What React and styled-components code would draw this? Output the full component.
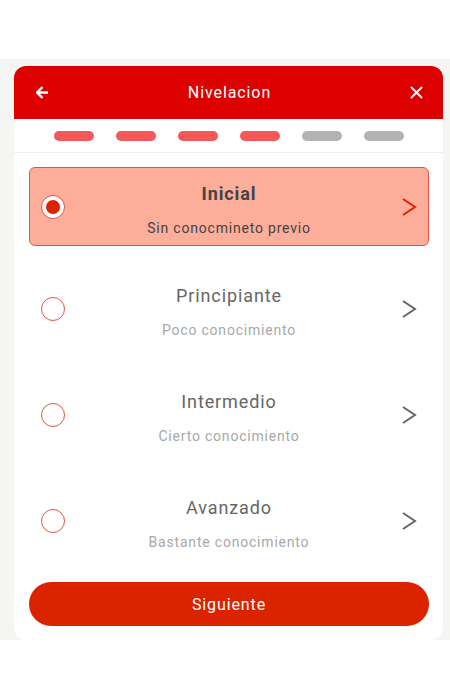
import React, { useState } from 'react'
import styled, { createGlobalStyle } from 'styled-components'

const GlobalStyle = createGlobalStyle`
  body {
    margin: 0;
    background: #ffffff;
    font-family: Roboto, "Noto Sans", sans-serif;
  }
`

const levels = [
  { title: 'Inicial', sub: 'Sin conocmineto previo' },
  { title: 'Principiante', sub: 'Poco conocimiento' },
  { title: 'Intermedio', sub: 'Cierto conocimiento' },
  { title: 'Avanzado', sub: 'Bastante conocimiento' },
]

const steps = [true, true, true, true, false, false]

const Backdrop = styled.div`
  margin-top: 59px;
  background: #f5f5f3;
  padding: 7px 7px 0 14px;
`

const Card = styled.div`
  background: #ffffff;
  border-radius: 12px;
  overflow: hidden;
  display: flex;
  flex-direction: column;
`

const Header = styled.header`
  height: 53px;
  background: #dc0000;
  display: flex;
  align-items: center;
  justify-content: space-between;
  padding: 0 18px 0 20px;
  color: #ffffff;
`

const Title = styled.h1`
  margin: 0;
  font-size: 16px;
  font-weight: 400;
  letter-spacing: 0.9px;
`

const IconButton = styled.button`
  background: none;
  border: none;
  padding: 0;
  width: 16px;
  height: 16px;
  display: flex;
  align-items: center;
  justify-content: center;
  color: #ffffff;
`

const Progress = styled.div`
  height: 33px;
  border-bottom: 1px solid #f0f0f0;
  display: flex;
  align-items: center;
  justify-content: center;
  gap: 22px;
`

const Dash = styled.span`
  width: 40px;
  height: 10px;
  border-radius: 5px;
  background: ${(p) => (p.$done ? '#f55858' : '#b3b3b3')};
`

const List = styled.div`
  display: flex;
  flex-direction: column;
  gap: 27px;
  padding: 14px 14px 0 15px;
`

const Option = styled.div`
  height: 79px;
  box-sizing: border-box;
  border-radius: 6px;
  border: 1px solid ${(p) => (p.$active ? '#e8533d' : 'transparent')};
  background: ${(p) => (p.$active ? '#fcae9b' : 'transparent')};
  margin-bottom: ${(p) => (p.$active ? '-4px' : '0')};
  display: grid;
  grid-template-columns: 24px 1fr 24px;
  align-items: center;
  padding: 0 11px 0 11px;
  cursor: pointer;
`

const Radio = styled.span`
  width: 24px;
  height: 24px;
  box-sizing: border-box;
  border-radius: 50%;
  border: 1px solid #e8533d;
  background: #ffffff;
  display: flex;
  align-items: center;
  justify-content: center;
  &::after {
    content: '';
    display: ${(p) => (p.$checked ? 'block' : 'none')};
    width: 14px;
    height: 14px;
    border-radius: 50%;
    background: #dc2300;
  }
`

const Texts = styled.div`
  display: flex;
  flex-direction: column;
  align-items: center;
  gap: 16px;
  padding-top: 5px;
`

const OptionTitle = styled.span`
  font-size: 18px;
  letter-spacing: 0.9px;
  font-weight: ${(p) => (p.$active ? 700 : 400)};
  color: ${(p) => (p.$active ? '#444444' : '#666666')};
`

const OptionSub = styled.span`
  font-size: 14px;
  letter-spacing: 0.8px;
  color: ${(p) => (p.$active ? '#444444' : '#a8a8a8')};
`

const Chevron = styled.svg`
  width: 16px;
  height: 22px;
  justify-self: end;
  color: ${(p) => (p.$active ? '#dc2300' : '#666666')};
`

const Footer = styled.div`
  padding: 22px 14px 14px 15px;
`

const NextButton = styled.button`
  width: 100%;
  height: 44px;
  border: none;
  border-radius: 22px;
  background: #dc2300;
  color: #ffffff;
  font-family: inherit;
  font-size: 16px;
  letter-spacing: 0.9px;
  cursor: pointer;
`

export default function App() {
  const [selected, setSelected] = useState(0)

  return (
    <>
      <GlobalStyle />
      <Backdrop>
        <Card>
          <Header>
            <IconButton aria-label="back">
              <svg width="13" height="13" viewBox="0 0 13 13">
                <path d="M6.5 1 L1 6.5 L6.5 12 M1.5 6.5 H12" fill="none" stroke="currentColor" strokeWidth="2.4" strokeLinejoin="miter" />
              </svg>
            </IconButton>
            <Title>Nivelacion</Title>
            <IconButton aria-label="close">
              <svg width="13" height="13" viewBox="0 0 13 13">
                <path d="M1.5 1.5 L11.5 11.5 M11.5 1.5 L1.5 11.5" stroke="currentColor" strokeWidth="2" strokeLinecap="round" />
              </svg>
            </IconButton>
          </Header>

          <Progress>
            {steps.map((done, i) => (
              <Dash key={i} $done={done} />
            ))}
          </Progress>

          <List>
            {levels.map((lvl, i) => {
              const active = i === selected
              return (
                <Option key={lvl.title} $active={active} onClick={() => setSelected(i)}>
                  <Radio $checked={active} />
                  <Texts>
                    <OptionTitle $active={active}>{lvl.title}</OptionTitle>
                    <OptionSub $active={active}>{lvl.sub}</OptionSub>
                  </Texts>
                  <Chevron $active={active} viewBox="0 0 16 22">
                    <path d="M2 3 L14 11 L2 19" fill="none" stroke="currentColor" strokeWidth="2" />
                  </Chevron>
                </Option>
              )
            })}
          </List>

          <Footer>
            <NextButton>Siguiente</NextButton>
          </Footer>
        </Card>
      </Backdrop>
    </>
  )
}
